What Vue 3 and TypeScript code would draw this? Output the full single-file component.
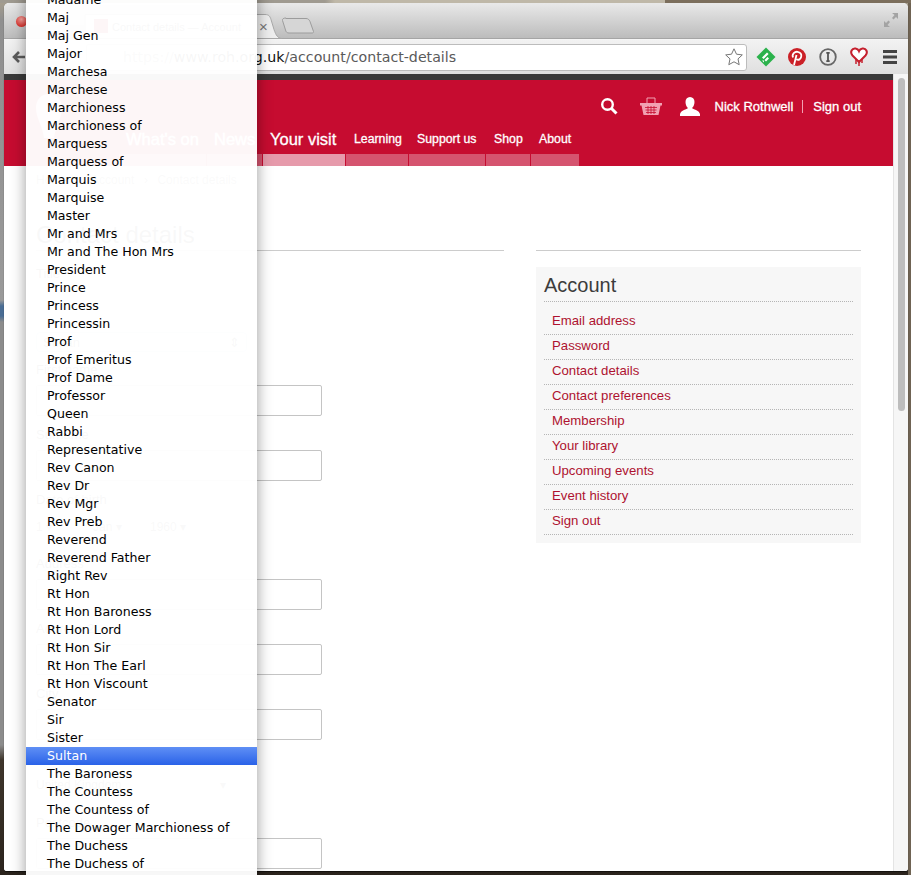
<script setup lang="ts">
const titles = [
  'Madame', 'Maj', 'Maj Gen', 'Major', 'Marchesa', 'Marchese', 'Marchioness', 'Marchioness of',
  'Marquess', 'Marquess of', 'Marquis', 'Marquise', 'Master', 'Mr and Mrs', 'Mr and The Hon Mrs',
  'President', 'Prince', 'Princess', 'Princessin', 'Prof', 'Prof Emeritus', 'Prof Dame', 'Professor',
  'Queen', 'Rabbi', 'Representative', 'Rev Canon', 'Rev Dr', 'Rev Mgr', 'Rev Preb', 'Reverend',
  'Reverend Father', 'Right Rev', 'Rt Hon', 'Rt Hon Baroness', 'Rt Hon Lord', 'Rt Hon Sir',
  'Rt Hon The Earl', 'Rt Hon Viscount', 'Senator', 'Sir', 'Sister', 'Sultan', 'The Baroness',
  'The Countess', 'The Countess of', 'The Dowager Marchioness of', 'The Duchess', 'The Duchess of',
]

const navItems = [
  { label: "What's on", width: 87, big: true, tone: 'mid' },
  { label: 'News', width: 55, big: true, tone: 'mid' },
  { label: 'Your visit', width: 82, big: true, tone: 'light' },
  { label: 'Learning', width: 62, big: false, tone: 'mid' },
  { label: 'Support us', width: 76, big: false, tone: 'mid' },
  { label: 'Shop', width: 44, big: false, tone: 'mid' },
  { label: 'About', width: 48, big: false, tone: 'mid' },
]

const accountLinks = [
  'Email address', 'Password', 'Contact details', 'Contact preferences', 'Membership',
  'Your library', 'Upcoming events', 'Event history', 'Sign out',
]
</script>

<template>
  <div class="desktop">
    <div class="window">
      <div class="titlebar">
        <span class="close-dot"></span>
        <svg class="tabs" width="300" height="26" viewBox="0 0 300 26">
          <path d="M50 25.500h207c-4 0-6-3-8-9l-3-10c-1-3-2-5-6-5H60v24z" fill="#eeeeee" stroke="#a8a8a8" />
          <path d="M261 5.500h20c2 0 3 1 4 3l3.500 10c.3 1-.5 1.500-1.500 1.500h-23c-2 0-3-1-3.500-3l-3-9.500c-.5-1.500 1-2.500 3.500-2.500z" fill="#d6d6d6" stroke="#9c9c9c" />
        </svg>
        <span class="favicon"></span>
        <span class="tab-title">Contact details — Account</span>
        <span class="tab-close">×</span>
        <svg class="fullscreen" width="16" height="16" viewBox="0 0 16 16">
          <path d="M9 1h6v6l-2-2-2.500 2.500-1.500-1.500L11.500 3zM7 15H1V9l2 2 2.500-2.500 1.500 1.500L4.500 13z" fill="#a3a3a3" />
        </svg>
      </div>

      <div class="toolbar">
        <svg class="back" width="14" height="14" viewBox="0 0 14 14">
          <path d="M13 7H3M7 2L2 7l5 5" fill="none" stroke="#5c5c5c" stroke-width="2.600" />
        </svg>
        <div class="omnibox">
          <span class="url"><span class="url-faded">https://</span><span class="url-host">www.roh.org.uk</span>/account/contact-details</span>
          <svg width="20" height="20" viewBox="0 0 20 20">
            <path d="M10 1.800l2.500 5.400 5.800.7-4.300 4 1.200 5.800-5.200-2.900-5.200 2.900 1.200-5.800-4.300-4 5.800-.7z" fill="#fff" stroke="#777" />
          </svg>
        </div>
        <div class="extensions">
          <svg width="20" height="20" viewBox="0 0 20 20">
            <path d="M10 .5l9.500 9.500-9.500 9.500L.5 10z" fill="#2bb24c" />
            <path d="M6 10.500l5-5 1.600 1.600-5 5zM8.500 13l3-3 1.500 1.500-3 3zM6 13.500h2v2z" fill="#fff" />
          </svg>
          <svg width="20" height="20" viewBox="0 0 20 20">
            <circle cx="10" cy="10" r="9" fill="#cb2027" />
            <path d="M7 18l2.500-10M6 10.500C4.500 6.500 8 4.500 10.500 4.800c3 .3 4.300 2.500 3.700 5-.5 2.300-2.500 3.700-4.700 2.500" fill="none" stroke="#fff" stroke-width="1.800" />
          </svg>
          <svg width="20" height="20" viewBox="0 0 20 20">
            <circle cx="10" cy="10" r="7.800" fill="none" stroke="#666" stroke-width="1.800" />
            <path d="M8.300 5.800h3.400M8.300 14.200h3.400M10 5.800v8.400" fill="none" stroke="#555" stroke-width="1.800" />
          </svg>
          <svg width="20" height="20" viewBox="0 0 20 20">
            <path d="M10 15L3.500 8.500C.5 5 3 1 6.500 1.500 8.500 1.800 9.500 3 10 4.200 10.500 3 11.500 1.800 13.500 1.500 17 1 19.500 5 16.500 8.500z" fill="#fff" stroke="#c5202e" stroke-width="2" />
            <path d="M7 12v5M10 14v5M13 12v4" fill="none" stroke="#c5202e" stroke-width="1.500" />
          </svg>
          <svg width="20" height="20" viewBox="0 0 20 20">
            <path d="M3 4.500h14M3 10h14M3 15.500h14" fill="none" stroke="#444" stroke-width="2.800" />
          </svg>
        </div>
      </div>

      <div class="viewport">
        <div class="page">
          <header class="site-header">
            <svg class="logo-mark" width="26" height="44" viewBox="0 0 26 44">
              <path d="M13 0c8 0 13 6 13 14 0 10-6 16-8 30H8C6 30 0 24 0 14 0 6 5 0 13 0z" fill="#f3c3cd" />
            </svg>
            <div class="utility">
              <svg class="search" width="18" height="18" viewBox="0 0 18 18">
                <circle cx="7.500" cy="7.500" r="5.300" fill="none" stroke="#fff" stroke-width="2.400" />
                <path d="M11.500 11.500l5 5" stroke="#fff" stroke-width="3" />
              </svg>
              <svg class="basket" width="22" height="19" viewBox="0 0 22 19">
                <path d="M7 6V1h8v5" fill="none" stroke="#f2a0b2" />
                <path d="M0 6h22v2.500h-1.500L18.500 18h-15L1.500 8.500H0z" fill="#f2a0b2" />
                <path d="M5 10.500h12M5.500 13h11M6 15.500h10M8 9v8M11 9v8M14 9v8" stroke="#c60c30" stroke-width=".8" />
              </svg>
              <svg class="user" width="20" height="19" viewBox="0 0 20 19">
                <path d="M10 0c3 0 4.500 2.200 4.500 5 0 2.500-1 5-2.500 6 1 1.500 7 2 8 6v2H0v-2c1-4 7-4.500 8-6-1.500-1-2.500-3.500-2.500-6C5.500 2.200 7 0 10 0z" fill="#fff" />
              </svg>
              <span class="user-name">Nick Rothwell</span>
              <span class="user-sep"></span>
              <span class="user-name">Sign out</span>
            </div>
            <nav class="main-nav">
              <div v-for="item in navItems" :key="item.label" class="nav-item" :style="{ width: item.width + 'px' }">
                <span class="nav-label" :class="{ big: item.big }">{{ item.label }}</span>
                <span class="nav-strip" :class="item.tone"></span>
              </div>
            </nav>
          </header>

          <div class="crumbs">
            <span>Home</span><span>›</span><span>Account</span><span>›</span><span>Contact details</span>
          </div>

          <div class="columns">
            <main class="form-col">
              <h1>Contact details</h1>
              <form class="form">
                <label class="field-label title-label">Title</label>
                <div class="select-box"><span>Sultan</span><span>⇕</span></div>
                <label class="field-label">First name</label>
                <input class="text-input" value="" />
                <label class="field-label">Surname</label>
                <input class="text-input" value="" />
                <label class="field-label">Date of birth</label>
                <div class="date-row"><span>1 ▾</span><span>Jan ▾</span><span>1960 ▾</span></div>
                <label class="field-label">Address</label>
                <input class="text-input" value="" />
                <label class="field-label">Address 2</label>
                <input class="text-input" value="" />
                <label class="field-label">City</label>
                <input class="text-input" value="" />
                <label class="field-label">Country</label>
                <div class="country-select"><span>United Kingdom</span><span>▾</span></div>
                <label class="field-label">Postcode</label>
                <input class="text-input" value="" />
              </form>
            </main>

            <aside class="side-col">
              <div class="account-box">
                <h2>Account</h2>
                <ul>
                  <li v-for="link in accountLinks" :key="link">{{ link }}</li>
                </ul>
              </div>
            </aside>
          </div>
        </div>

        <div class="scrollbar"><div class="thumb"></div></div>
      </div>
    </div>

    <!-- open native select popup, sits over everything -->
    <ul class="popup">
      <li v-for="title in titles" :key="title" :class="{ selected: title === 'Sultan' }">{{ title }}</li>
    </ul>
  </div>
</template>

<style scoped>
.desktop {
  position: relative;
  width: 911px;
  height: 875px;
  overflow: hidden;
  box-sizing: border-box;
  padding: 3px 3px 4px 4px;
  background:
    linear-gradient(90deg, #9f9a90 0, #9f9a90 325px, #bfb8a8 335px, #bfb8a8 665px, #7b6e5c 665px) 0 0 / 100% 3px no-repeat,
    linear-gradient(180deg, #a89f8d 0, #8f8f8f 20px, #9a9a9a 300px, #4a6d94 306px, #4a6d94 316px, #8c8c8c 322px, #8c8c8c 745px, #3f362c 760px, #2b241d 875px);
  font-family: "Liberation Sans", Arial, sans-serif;
}

.desktop::after {
  content: "";
  position: absolute;
  top: 3px;
  bottom: 0;
  right: 0;
  width: 3px;
  background: #6f6353;
}

.window {
  position: relative;
  z-index: 1;
  display: flex;
  flex-direction: column;
  height: 100%;
  border-radius: 5px 5px 3px 3px;
  overflow: hidden;
  background: #fff;
  box-shadow: 0 1px 1px rgba(0, 0, 0, 0.6);
}

.titlebar {
  position: relative;
  height: 36px;
  flex: none;
  box-sizing: border-box;
  border-bottom: 1px solid #a5a5a5;
  background: linear-gradient(180deg, #e9e9e9, #bcbcbc);
}

.close-dot {
  position: absolute;
  left: 12px;
  top: 13px;
  width: 11px;
  height: 11px;
  border-radius: 50%;
  background: radial-gradient(circle at 50% 30%, #f9a5a0, #dc3b36 70%);
}

.tabs {
  position: absolute;
  left: 21px;
  top: 10px;
}

.favicon {
  position: absolute;
  left: 90px;
  top: 16px;
  width: 14px;
  height: 14px;
  background: #c60c30;
}

.tab-title {
  position: absolute;
  left: 108px;
  top: 18px;
  font-size: 11px;
  color: #444;
  white-space: nowrap;
}

.tab-close {
  position: absolute;
  left: 255px;
  top: 15px;
  font-size: 15px;
  line-height: 18px;
  color: #777;
}

.fullscreen {
  position: absolute;
  right: 9px;
  top: 9px;
}

.toolbar {
  display: flex;
  align-items: center;
  height: 35px;
  flex: none;
  box-sizing: border-box;
  padding: 0 0 0 8px;
  border-top: 1px solid #f5f5f5;
  background: linear-gradient(180deg, #f2f2f2, #dfdfdf);
}

.back {
  flex: none;
}

.omnibox {
  display: flex;
  align-items: center;
  justify-content: space-between;
  width: 661px;
  height: 27px;
  margin-left: 60px;
  box-sizing: border-box;
  padding: 0 2px 0 36px;
  border: 1px solid #bcbcbc;
  border-radius: 3px;
  background: #fff;
}

.url {
  font-family: "DejaVu Sans", sans-serif;
  font-size: 14.200px;
  color: #5a5a5a;
  white-space: nowrap;
}

.url-faded {
  color: #888;
}

.url-host {
  color: #111;
}

.extensions {
  display: flex;
  gap: 11px;
  margin-left: 9px;
}

.viewport {
  display: flex;
  flex: 1;
  min-height: 0;
}

.page {
  flex: 1;
  min-width: 0;
  overflow: hidden;
  border-top: 6px solid #3a3a3a;
  background: #fff;
}

.site-header {
  position: relative;
  display: flex;
  flex-direction: column;
  justify-content: space-between;
  height: 86px;
  padding-top: 16px;
  box-sizing: border-box;
  background: #c60c30;
}

.logo-mark {
  position: absolute;
  left: 32px;
  top: 14px;
}

.utility {
  display: flex;
  align-items: center;
  justify-content: flex-end;
  padding-right: 32px;
  height: 20px;
}

.search {
  margin-right: 22px;
}

.basket {
  margin-right: 18px;
}

.user {
  margin-right: 15px;
}

.user-name {
  font-size: 13px;
  color: #fff;
  -webkit-text-stroke: 0.3px #fff;
  white-space: nowrap;
}

.user-sep {
  width: 1px;
  height: 13px;
  margin: 0 10px 0 9px;
  background: #f2a0b2;
}

.main-nav {
  display: flex;
  padding-left: 115px;
  align-items: flex-end;
}

.nav-item {
  display: flex;
  flex-direction: column;
  margin-right: 1px;
  flex: none;
}

.nav-label {
  padding: 0 0 5px 8px;
  font-size: 12.300px;
  line-height: 20px;
  color: #fff;
  -webkit-text-stroke: 0.3px #fff;
  white-space: nowrap;
}

.nav-label.big {
  padding-left: 7px;
  font-size: 16.500px;
}

.nav-strip {
  display: block;
  height: 12px;
}

.nav-strip.mid {
  background: #d5546f;
}

.nav-strip.light {
  background: #e69aab;
}

.crumbs {
  display: flex;
  gap: 9.500px;
  padding: 7px 0 0 32px;
  font-size: 12px;
  line-height: 14px;
  color: #777;
}

.columns {
  display: grid;
  grid-template-columns: 468px 325px;
  column-gap: 32px;
  padding: 33px 32px 0;
}

h1 {
  margin: 0;
  height: 30px;
  border-bottom: 1px solid #ccc;
  font-size: 24px;
  font-weight: 400;
  line-height: 30px;
  color: #444;
}

.form {
  display: flex;
  flex-direction: column;
  align-items: flex-start;
  padding-top: 15px;
}

.field-label {
  font-size: 13px;
  line-height: 16px;
  margin-bottom: 7px;
  color: #444;
}

.select-box {
  display: flex;
  justify-content: space-between;
  width: 211px;
  height: 20px;
  margin: 43px 0 10px;
  box-sizing: border-box;
  padding: 2px 6px;
  border: 1px solid #b9cfe6;
  border-radius: 4px;
  font-size: 13px;
  color: #444;
}

.text-input {
  width: 286px;
  height: 31px;
  margin: 0 0 11px;
  box-sizing: border-box;
  border: 1px solid #c4c4c4;
  border-radius: 2px;
  background: #fff;
  flex: none;
}

.date-row {
  display: flex;
  height: 20px;
  margin: 5px 0 16px;
  font-size: 12px;
  color: #555;
}

.date-row span {
  width: 57px;
}

.country-select {
  display: flex;
  justify-content: space-between;
  width: 190px;
  height: 20px;
  margin: 4px 0 17px;
  font-size: 12px;
  color: #555;
}

.side-col {
  border-top: 1px solid #ccc;
  margin-top: 30px;
  padding-top: 16px;
}

.account-box {
  height: 276px;
  box-sizing: border-box;
  padding: 0 8px;
  background: #f7f7f7;
}

h2 {
  margin: 0;
  height: 35px;
  box-sizing: border-box;
  border-bottom: 1px dotted #b5b5b5;
  font-size: 20px;
  font-weight: 400;
  line-height: 36px;
  color: #3c3c3c;
}

ul {
  margin: 0;
  padding: 0;
  list-style: none;
}

.account-box ul {
  padding-top: 8px;
}

.account-box li {
  height: 25px;
  box-sizing: border-box;
  padding-left: 8px;
  border-bottom: 1px dotted #b5b5b5;
  font-size: 13.200px;
  line-height: 22px;
  color: #ae1230;
}

.scrollbar {
  flex: none;
  width: 15px;
  box-sizing: border-box;
  padding: 4px 3px 0 4px;
  border-left: 1px solid #e4e4e4;
  background: #f6f6f6;
}

.thumb {
  height: 333px;
  border-radius: 4px;
  background: #bdbdbd;
}

.popup {
  position: absolute;
  z-index: 2;
  left: 26px;
  top: -9px;
  width: 231px;
  height: 900px;
  background: rgba(255, 255, 255, 0.965);
  box-shadow: 0 0 14px rgba(0, 0, 0, 0.4);
}

.popup li {
  height: 18px;
  padding-left: 21px;
  font-family: "DejaVu Sans", sans-serif;
  font-size: 12.600px;
  line-height: 18px;
  color: #000;
  white-space: nowrap;
}

.popup li.selected {
  color: #fff;
  background: linear-gradient(180deg, #5f8ff5, #2a62e8);
}
</style>
